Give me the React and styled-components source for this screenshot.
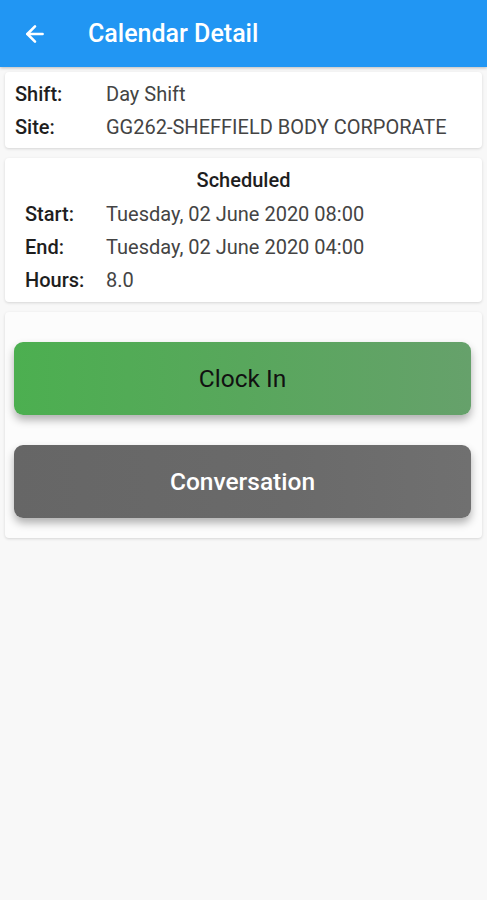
import React from 'react';
import styled, { createGlobalStyle } from 'styled-components';
import { ArrowLeft } from 'lucide-react';

const GlobalStyle = createGlobalStyle`
  body {
    margin: 0;
    background: #f8f8f8;
    font-family: Roboto, 'Noto Sans', sans-serif;
  }
`;

const Page = styled.div`
  min-height: 900px;
  background: #f8f8f8;
`;

const Header = styled.header`
  height: 67px;
  background: #2196f3;
  display: flex;
  align-items: center;
  padding: 0 0 0 22px;
  box-shadow: 0 1px 3px rgba(0, 0, 0, 0.25);
  color: #fff;
`;

const Title = styled.h1`
  margin: 0 0 0 40px;
  font-size: 25px;
  font-weight: 500;
`;

const Body = styled.main`
  display: flex;
  flex-direction: column;
  gap: 10px;
  padding: 5px 5px 0 5px;
`;

const Card = styled.section`
  background: #fff;
  border-radius: 4px;
  box-shadow: 0 1px 3px rgba(0, 0, 0, 0.14);
  padding: ${(p) => p.$pad || '9px 10px'};
`;

const Row = styled.div`
  display: grid;
  grid-template-columns: ${(p) => p.$label || '91px'} 1fr;
  align-items: center;
  height: 33px;
  font-size: 20px;
`;

const Label = styled.span`
  color: #1e1e1e;
  font-weight: 500;
`;

const Value = styled.span`
  color: #444;
`;

const Heading = styled.div`
  text-align: center;
  font-size: 20px;
  font-weight: 500;
  color: #1e1e1e;
  height: 33px;
  line-height: 33px;
`;

const ButtonCard = styled(Card)`
  display: flex;
  flex-direction: column;
  gap: 30px;
  padding: 30px 11px 20px 9px;
  background: #fcfcfc;
`;

const ActionButton = styled.button`
  height: 73px;
  border: none;
  border-radius: 9px;
  font-family: Roboto, sans-serif;
  font-size: 24.5px;
  font-weight: ${(p) => p.$weight || 500};
  color: ${(p) => p.$text};
  background: ${(p) => p.$bg};
  box-shadow: 0 5px 9px rgba(0, 0, 0, 0.3);
`;

export default function App() {
  return (
    <Page>
      <GlobalStyle />
      <Header>
        <ArrowLeft size={26} strokeWidth={2.4} />
        <Title>Calendar Detail</Title>
      </Header>
      <Body>
        <Card $pad="5px 10px 5px 10px">
          <Row>
            <Label>Shift:</Label>
            <Value>Day Shift</Value>
          </Row>
          <Row>
            <Label>Site:</Label>
            <Value>GG262-SHEFFIELD BODY CORPORATE</Value>
          </Row>
        </Card>
        <Card $pad="6px 20px 6px 20px">
          <Heading>Scheduled</Heading>
          <Row $label="81px">
            <Label>Start:</Label>
            <Value>Tuesday, 02 June 2020 08:00</Value>
          </Row>
          <Row $label="81px">
            <Label>End:</Label>
            <Value>Tuesday, 02 June 2020 04:00</Value>
          </Row>
          <Row $label="81px">
            <Label>Hours:</Label>
            <Value>8.0</Value>
          </Row>
        </Card>
        <ButtonCard>
          <ActionButton
            $bg="linear-gradient(90deg, #4caf50 0%, #58a75c 50%, #66a16b 100%)"
            $text="#111"
            $weight={400}
          >
            Clock In
          </ActionButton>
          <ActionButton
            $bg="linear-gradient(90deg, #666 0%, #6a6a6a 60%, #707070 100%)"
            $text="#fff"
          >
            Conversation
          </ActionButton>
        </ButtonCard>
      </Body>
    </Page>
  );
}
